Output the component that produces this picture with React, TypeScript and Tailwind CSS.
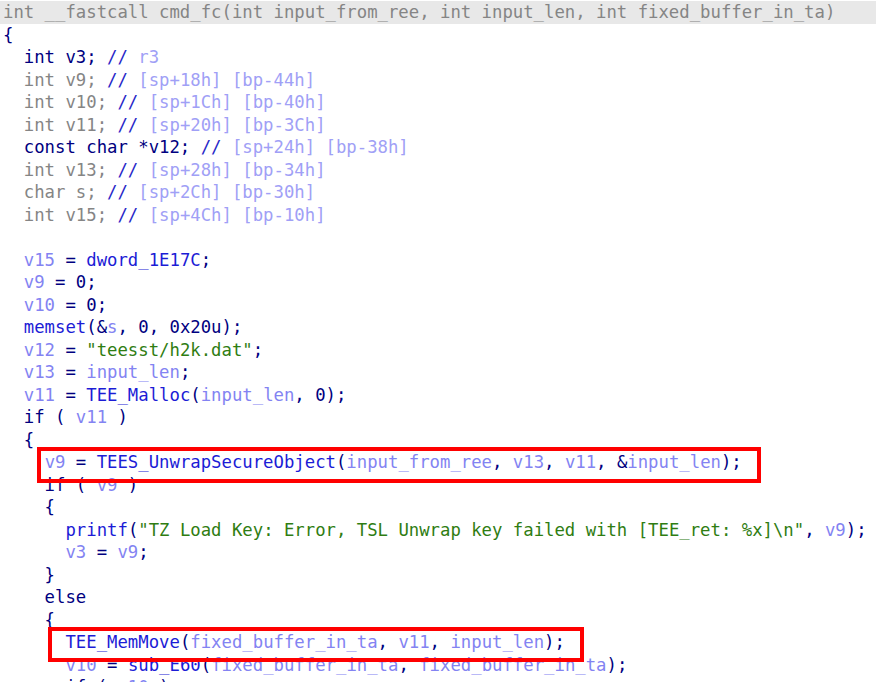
type Tok = [string, string];

const N = "text-[#000080]";
const G = "text-[#858585]";
const V = "text-[#8383f2]";
const C = "text-[#a0a0f6]";
const F = "text-[#1c1cd6]";
const S = "text-[#2f7d12]";
const K = "text-[#2828c8]";

const decl = (t: string, c: string, cls: string = G): Tok[] => [
  [t, cls],
  ["//", K],
  [" " + c, C],
];

const lines: Tok[][] = [
  [],
  [["{", N]],
  decl("  int v3; ", "r3", N),
  decl("  int v9; ", "[sp+18h] [bp-44h]"),
  decl("  int v10; ", "[sp+1Ch] [bp-40h]"),
  decl("  int v11; ", "[sp+20h] [bp-3Ch]"),
  decl("  const char *v12; ", "[sp+24h] [bp-38h]", N),
  decl("  int v13; ", "[sp+28h] [bp-34h]"),
  decl("  char s; ", "[sp+2Ch] [bp-30h]"),
  decl("  int v15; ", "[sp+4Ch] [bp-10h]"),
  [],
  [["  ", N], ["v15", V], [" = ", N], ["dword_1E17C", F], [";", N]],
  [["  ", N], ["v9", V], [" = 0;", N]],
  [["  ", N], ["v10", V], [" = 0;", N]],
  [["  ", N], ["memset", F], ["(&", N], ["s", V], [", 0, 0x20u);", N]],
  [["  ", N], ["v12", V], [" = ", N], ['"teesst/h2k.dat"', S], [";", N]],
  [["  ", N], ["v13", V], [" = ", N], ["input_len", V], [";", N]],
  [["  ", N], ["v11", V], [" = ", N], ["TEE_Malloc", F], ["(", N], ["input_len", V], [", 0);", N]],
  [["  if ( ", N], ["v11", V], [" )", N]],
  [["  {", N]],
  [
    ["    ", N], ["v9", V], [" = ", N], ["TEES_UnwrapSecureObject", F], ["(", N],
    ["input_from_ree", V], [", ", N], ["v13", V], [", ", N], ["v11", V], [", &", N],
    ["input_len", V], [");", N],
  ],
  [["    if ( ", N], ["v9", V], [" )", N]],
  [["    {", N]],
  [
    ["      ", N], ["printf", F], ["(", N],
    ['"TZ Load Key: Error, TSL Unwrap key failed with [TEE_ret: %x]\\n"', S],
    [", ", N], ["v9", V], [");", N],
  ],
  [["      ", N], ["v3", V], [" = ", N], ["v9", V], [";", N]],
  [["    }", N]],
  [["    else", N]],
  [["    {", N]],
  [
    ["      ", N], ["TEE_MemMove", F], ["(", N], ["fixed_buffer_in_ta", V], [", ", N],
    ["v11", V], [", ", N], ["input_len", V], [");", N],
  ],
  [
    ["      ", N], ["v10", V], [" = ", N], ["sub_E60", F], ["(", N], ["fixed_buffer_in_ta", V],
    [", ", N], ["fixed_buffer_in_ta", V], [");", N],
  ],
  [["      if ( ", N], ["v10", V], [" )", N]],
];

export default function App() {
  return (
    <div className="w-[876px] h-[682px] overflow-hidden bg-white relative font-['DejaVu_Sans_Mono',monospace] text-[17.3px] leading-[22.5px] whitespace-pre">
      <div className="pt-[1px]">
        <div className="bg-[#e8e8e8] pl-[3px] text-[#858585]">
          int __fastcall cmd_fc(int input_from_ree, int input_len, int fixed_buffer_in_ta)
        </div>
        {lines.slice(1).map((line, i) => (
          <div key={i} className="pl-[3px] h-[22.5px]">
            {line.map(([t, cls], j) => (
              <span key={j} className={cls}>
                {t}
              </span>
            ))}
          </div>
        ))}
      </div>
      {/* highlight boxes */}
      <div className="absolute left-[37px] top-[447px] w-[724px] h-[36px] border-[4px] border-[#ff0000]" />
      <div className="absolute left-[48px] top-[627px] w-[536px] h-[35px] border-[4px] border-[#ff0000]" />
    </div>
  );
}
